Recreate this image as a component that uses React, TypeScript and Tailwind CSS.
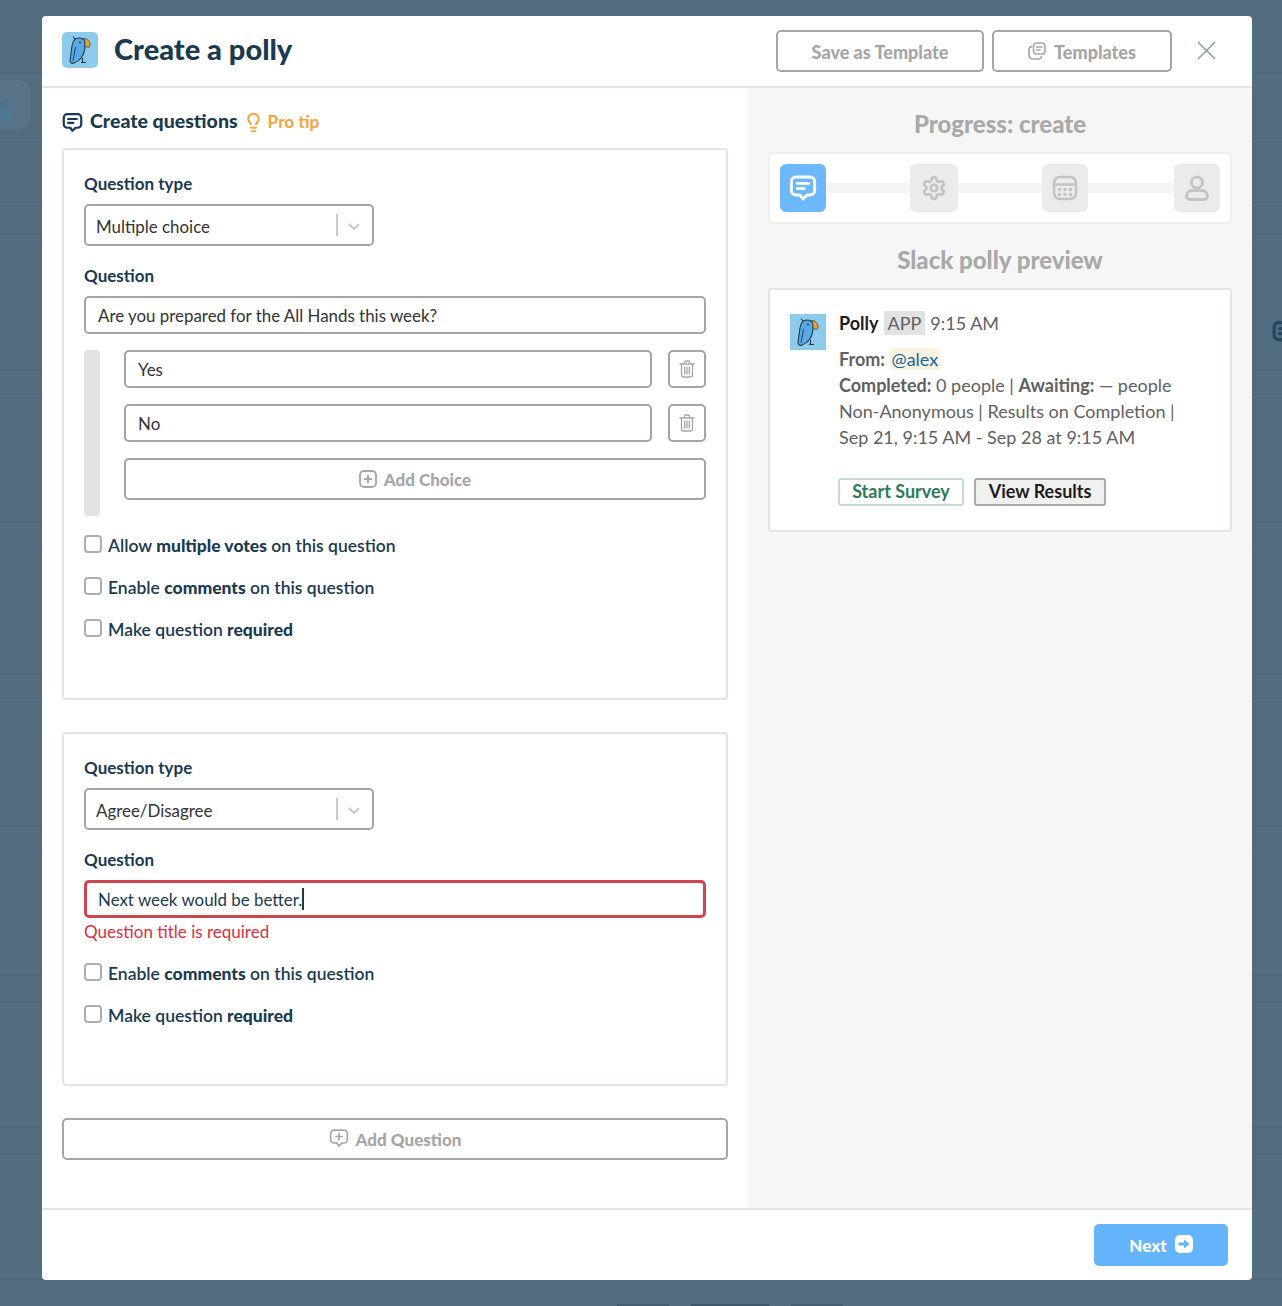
// App.tsx — "Create a polly" modal over the blurred Polly dashboard
import { Lightbulb, Settings } from 'lucide-react';

const LINE_YS = [72, 138, 202, 233, 243, 369, 394, 521, 547, 673, 698, 825, 851, 975, 1001, 1127, 1153, 1279];

const FONT = "font-['Lato','Noto_Sans',sans-serif]";

// ── Drawn icons ──────────────────────────────────────────────────────────────
function Parrot({ size = 36 }: { size?: number }) {
  return (
    <svg width={size} height={size} viewBox="0 0 36 36" fill="none">
      <path d="M17 6C12.500 6 10.500 10 10 14L8 28.500C8 31 10 32 12 31C18 29 22 23 23 16L23 10C22 7 20 6 17 6Z" fill="#5AA9E4" stroke="#1F3A4D" strokeWidth="1.100" />
      <path d="M21.500 6.500C25.500 6.500 28 9.500 28 13C28 15 26.500 16 25 15L23 14C23.300 11 23 8.500 21.500 6.500Z" fill="#F0A232" stroke="#1F3A4D" strokeWidth="0.700" />
      <path d="M13.500 15L11 29" stroke="#1F3A4D" strokeWidth="0.900" />
      <path d="M13 7L11 4.500M20.500 26V30.500M19 30.500H24" stroke="#1F3A4D" strokeWidth="1.100" />
      <circle cx="18" cy="10.500" r="0.900" fill="#1F3A4D" />
    </svg>
  );
}

function Bubble({ size = 20, color = '#1B3A50', lines = true, plus = false, stroke = 2.500, className = '' }: { size?: number; color?: string; lines?: boolean; plus?: boolean; stroke?: number; className?: string }) {
  return (
    <svg className={className} width={size} height={size} viewBox="0 0 24 24" fill="none" stroke={color} strokeWidth={stroke} strokeLinecap="round" strokeLinejoin="round">
      <path d="M6 2.500H18C20.200 2.500 22 4.300 22 6.500V14C22 16.200 20.200 18 18 18H15.500L12 21.500L9.500 18H6C3.800 18 2 16.200 2 14V6.500C2 4.300 3.800 2.500 6 2.500Z" />
      {lines && <path d="M7 8H17M7 12.500H13" />}
      {plus && <path d="M12 6.500V14M8.300 10.200H15.700" />}
    </svg>
  );
}

function TemplatesIcon() {
  return (
    <svg className="-mt-[2px]" width="18" height="18" viewBox="0 0 18 18" fill="none" stroke="#A6A6A6" strokeWidth="1.600" strokeLinecap="round" strokeLinejoin="round">
      <rect x="5.500" y="1" width="11.500" height="11" rx="3" />
      <path d="M8.500 5H14M8.500 8H12" />
      <path d="M3.500 4.500C2 5 1 6 1 7.500V13C1 15.200 2.800 17 5 17H10.500C12 17 13 16 13.500 14.500" />
    </svg>
  );
}

function TrashIcon() {
  return (
    <svg width="16" height="18" viewBox="0 0 16 18" fill="none" stroke="#A6A6A6" strokeWidth="1.300" strokeLinecap="round" strokeLinejoin="round">
      <path d="M1 4H15M5.500 4V2.500C5.500 1.700 6.200 1 7 1H9C9.800 1 10.500 1.700 10.500 2.500V4" />
      <path d="M2.500 4V14.500C2.500 16 3.500 17 5 17H11C12.500 17 13.500 16 13.500 14.500V4" />
      <path d="M5.700 7V14M8 7V14M10.300 7V14" />
    </svg>
  );
}

function CalendarIcon() {
  return (
    <svg width="26" height="26" viewBox="0 0 26 26" fill="none" stroke="#C4C4C4" strokeWidth="2.600" strokeLinecap="round">
      <rect x="2" y="2" width="22" height="22" rx="6" />
      <path d="M2 9.500H24" />
      <path d="M7.500 14.500h.01M13 14.500h.01M18.500 14.500h.01M7.500 19.500h.01M13 19.500h.01M18.500 19.500h.01" strokeWidth="3.400" />
    </svg>
  );
}

function UserIcon() {
  return (
    <svg width="24" height="26" viewBox="0 0 24 26" fill="none" stroke="#C4C4C4" strokeWidth="2.800">
      <circle cx="12" cy="7.500" r="5.500" />
      <path d="M7 15.500H17C20 15.500 22.500 18 22.500 21C22.500 23 21 24.500 19 24.500H5C3 24.500 1.500 23 1.500 21C1.500 18 4 15.500 7 15.500Z" />
    </svg>
  );
}

// ── Form parts ───────────────────────────────────────────────────────────────
function FieldLabel({ children, className = '' }: { children: string; className?: string }) {
  return <div className={`h-6 text-[17px] leading-6 font-bold text-[#1B3A50] ${className}`}>{children}</div>;
}

function SelectBox({ value }: { value: string }) {
  return (
    <div className="mt-2 flex h-[42px] w-[290px] items-center rounded-[5px] border-2 border-[#A5A5A5] pl-[10px] pt-[2px] text-[16.900px] text-[#333]">
      <span className="flex-1 pt-[2px]">{value}</span>
      <span className="-mt-[2px] h-[22px] w-[2px] bg-[#CCCCCC]" />
      <svg className="ml-[9px] mr-[11px]" width="14" height="14" viewBox="0 0 14 14" fill="none" stroke="#C8C8C8" strokeWidth="2">
        <path d="M2 5L7 10L12 5" />
      </svg>
    </div>
  );
}

function TextInput({ value, className = '' }: { value: string; className?: string }) {
  return (
    <div className={`flex h-[38px] items-center rounded-[5px] border-2 border-[#A5A5A5] pl-3 pt-[2px] text-[16.900px] text-[#333] ${className}`}>
      {value}
    </div>
  );
}

function Check({ children }: { children: React.ReactNode }) {
  return (
    <div className="flex h-6 items-center text-[17.500px] font-semibold leading-[22px] text-[#1B3A50]">
      <span className="mr-[6px] -mt-1 h-[18px] w-[18px] shrink-0 rounded-[4px] border-2 border-[#A9AFB8] bg-white" />
      <span>{children}</span>
    </div>
  );
}

function ChoiceRow({ value }: { value: string }) {
  return (
    <div className="flex gap-4">
      <TextInput value={value} className="flex-1" />
      <button className="flex h-[38px] w-[38px] items-center justify-center rounded-[5px] border-2 border-[#A5A5A5]">
        <TrashIcon />
      </button>
    </div>
  );
}

function Step({ active, children, w = 'w-[46px]' }: { active?: boolean; children: React.ReactNode; w?: string }) {
  return (
    <div className={`flex h-12 ${w} shrink-0 items-center justify-center rounded-[6px] ${active ? 'bg-[#6CB8FB]' : 'bg-[#EBEBEB]'}`}>
      {children}
    </div>
  );
}

// ── Main component ───────────────────────────────────────────────────────────
export default function App() {
  return (
    <div className={`relative h-[1306px] w-[1282px] overflow-hidden bg-[#536D80] ${FONT}`}>
      {/* Dimmed page behind the modal */}
      {LINE_YS.map((y) => (
        <div key={y} className="absolute inset-x-0 h-px bg-[#4C6577]" style={{ top: y }} />
      ))}
      <div className="absolute left-0 top-[80px] h-[50px] w-[30px] rounded-r-xl bg-[#587387]" />
      <div className="absolute left-[1px] top-[99px] h-[9px] w-[9px] rounded-full bg-[#4A7290]" />
      <div className="absolute left-0 top-[109px] h-[12px] w-[13px] rounded-r-full bg-[#4F7892]" />
      <div className="absolute left-[1272px] top-[320px]">
        <Bubble size={26} color="#27475E" stroke={3} />
      </div>
      <div className="absolute left-[617px] top-[1304px] flex gap-[22px]">
        <div className="h-[2px] w-[52px] bg-[#465F70]" />
        <div className="h-[2px] w-[78px] bg-[#3F5868]" />
        <div className="h-[2px] w-[52px] bg-[#465F70]" />
      </div>

      {/* Modal */}
      <div className="absolute left-[42px] top-4 w-[1210px] overflow-hidden rounded-[4px] bg-white">
        {/* Header */}
        <div className="flex h-[72px] items-start border-b-2 border-[#DFE5EA] pl-5">
          <div className="mt-4 flex h-9 w-9 items-center justify-center rounded-[5px] bg-[#8ECBEA]">
            <Parrot />
          </div>
          <h1 className="ml-4 mt-[13px] text-[29px] font-black leading-10 text-[#1B3A50]">Create a polly</h1>
          <div className="ml-auto mt-[14px] flex gap-2">
            <button className="h-[42px] w-[208px] rounded-[5px] border-2 border-[#A5A5A5] pt-[2px] text-[18px] font-black text-[#A6A6A6]">
              Save as Template
            </button>
            <button className="flex h-[42px] w-[180px] items-center justify-center gap-2 rounded-[5px] border-2 border-[#A5A5A5] pt-[2px] text-[18px] font-black text-[#A6A6A6]">
              <TemplatesIcon />
              Templates
            </button>
          </div>
          <svg className="ml-[25px] mr-[36px] mt-[25px]" width="19" height="19" viewBox="0 0 19 19" fill="none" stroke="#8598A5" strokeWidth="1.400">
            <path d="M1 1L18 18M18 1L1 18" />
          </svg>
        </div>

        {/* Body */}
        <div className="flex h-[1120px]">
          <div className="w-[706px] px-5 pt-5">
            <div className="flex h-[28px] items-center text-[19.500px] font-black text-[#1B3A50]">
              <Bubble size={21} />
              <span className="ml-[7px] -mt-[2px]">Create questions</span>
              <Lightbulb className="ml-[5px]" size={21} color="#F2A53F" strokeWidth={2.300} />
              <span className="ml-1 text-[17.300px] font-bold text-[#F2A53F]">Pro tip</span>
            </div>

            {/* Question 1 */}
            <div className="mt-3 h-[552px] rounded-[4px] border-2 border-[#E0E5EA] px-5 pt-[22px]">
              <FieldLabel>Question type</FieldLabel>
              <SelectBox value="Multiple choice" />
              <FieldLabel className="mt-[18px]">Question</FieldLabel>
              <TextInput value="Are you prepared for the All Hands this week?" className="mt-2" />
              <div className="mt-4 flex">
                <div className="h-[166px] w-4 rounded-[4px] bg-[#E2E2E2]" />
                <div className="ml-6 flex flex-1 flex-col gap-4">
                  <ChoiceRow value="Yes" />
                  <ChoiceRow value="No" />
                  <button className="flex h-[42px] items-center justify-center gap-[7px] rounded-[5px] border-2 border-[#A5A5A5] pt-[2px] text-[17px] font-black text-[#A6A6A6]">
                    <svg className="-mt-[2px]" width="18" height="18" viewBox="0 0 18 18" fill="none" stroke="#A6A6A6" strokeWidth="1.800" strokeLinecap="round">
                      <rect x="1" y="1" width="16" height="16" rx="4" />
                      <path d="M9 5.500V12.500M5.500 9H12.500" />
                    </svg>
                    Add Choice
                  </button>
                </div>
              </div>
              <div className="mt-[18px] flex flex-col gap-[18px]">
                <Check>Allow <b className="font-black">multiple votes</b> on this question</Check>
                <Check>Enable <b className="font-black">comments</b> on this question</Check>
                <Check>Make question <b className="font-black">required</b></Check>
              </div>
            </div>

            {/* Question 2 */}
            <div className="mt-8 h-[354px] rounded-[4px] border-2 border-[#E0E5EA] px-5 pt-[22px]">
              <FieldLabel>Question type</FieldLabel>
              <SelectBox value="Agree/Disagree" />
              <FieldLabel className="mt-[18px]">Question</FieldLabel>
              <div className="mt-2 flex h-[38px] items-center rounded-[5px] border-[3px] border-[#CF444E] pl-[11px] text-[16.900px] text-[#1B3A50]">
                <span className="pt-[2px]">Next week would be better.</span>
                <span className="h-[22px] w-[2px] bg-[#1B3A50]" />
              </div>
              <div className="mt-[3px] h-6 text-[17px] leading-[22px] text-[#D9303F]">Question title is required</div>
              <div className="mt-[17px] flex flex-col gap-[18px]">
                <Check>Enable <b className="font-black">comments</b> on this question</Check>
                <Check>Make question <b className="font-black">required</b></Check>
              </div>
            </div>

            <button className="mt-8 flex h-[42px] w-full items-center justify-center gap-[7px] rounded-[5px] border-2 border-[#A5A5A5] pt-[2px] text-[17px] font-black text-[#A6A6A6]">
              <Bubble className="-mt-[4px]" size={20} color="#A6A6A6" lines={false} plus stroke={2} />
              Add Question
            </button>
          </div>

          {/* Right column */}
          <div className="flex-1 bg-[#F6F6F6] px-5 pt-[22px]">
            <h2 className="h-7 text-center text-[24px] font-black leading-7 text-[#A9A9A9]">Progress: create</h2>
            <div className="mt-[14px] flex h-[72px] items-center rounded-[4px] border-2 border-[#F0F0F0] bg-white px-[10px]">
              <Step active><Bubble size={28} color="#FFFFFF" /></Step>
              <div className="h-[10px] w-[84px] bg-[#F4F4F4]" />
              <Step w="w-[48px]"><Settings size={26} color="#C4C4C4" strokeWidth={2.500} /></Step>
              <div className="h-[10px] w-[84px] bg-[#F4F4F4]" />
              <Step><CalendarIcon /></Step>
              <div className="h-[10px] w-[86px] bg-[#F4F4F4]" />
              <Step><UserIcon /></Step>
            </div>
            <h2 className="mt-[22px] h-7 text-center text-[24px] font-black leading-7 text-[#A9A9A9]">Slack polly preview</h2>
            <div className="mt-[14px] flex h-[244px] rounded-[4px] border-2 border-[#E0E5EA] bg-white pl-5 pt-6">
              <div className="flex h-9 w-9 shrink-0 items-center justify-center bg-[#8ECBEA]">
                <Parrot />
              </div>
              <div className="ml-[13px] -mt-[4px] text-[18px] leading-[26px] text-[#616061]">
                <div className="flex h-[26px] items-center">
                  <b className="text-[#1D1C1D]">Polly</b>
                  <span className="ml-[5px] bg-[#E2E2E2] px-1 leading-6">APP</span>
                  <span className="ml-[5px]">9:15 AM</span>
                </div>
                <div className="mt-[10px]">
                  <b>From:</b> <span className="rounded-[2px] bg-[#FBF3DF] px-[2px] text-[#1264A3]">@alex</span>
                </div>
                <div><b>Completed:</b> 0 people | <b>Awaiting:</b> — people</div>
                <div>Non-Anonymous | Results on Completion |</div>
                <div>Sep 21, 9:15 AM - Sep 28 at 9:15 AM</div>
                <div className="-ml-px mt-[28px] flex gap-[10px]">
                  <button className="h-7 w-[126px] rounded-[3px] border-2 border-[#C5DAD2] pb-[2px] text-[18px] font-bold leading-5 text-[#2D7A5A]">Start Survey</button>
                  <button className="h-7 w-[132px] rounded-[3px] border-2 border-[#A9A9A9] bg-[#F0F0F0] pb-[2px] text-[18px] font-bold leading-5 text-[#1D1C1D]">View Results</button>
                </div>
              </div>
            </div>
          </div>
        </div>

        {/* Footer */}
        <div className="flex h-[72px] items-start justify-end border-t-2 border-[#DFE5EA] pr-6 pt-[14px]">
          <button className="flex h-[42px] w-[134px] items-center justify-center gap-2 rounded-[5px] bg-[#64B5FB] pt-[2px] text-[17px] font-black text-white">
            Next
            <svg className="-mt-1" width="18" height="18" viewBox="0 0 18 18">
              <rect width="18" height="18" rx="5" fill="#FFFFFF" />
              <path d="M3.500 7.500H9V4.500L14.500 9L9 13.500V10.500H3.500Z" fill="#64B5FB" />
            </svg>
          </button>
        </div>
      </div>
    </div>
  );
}
